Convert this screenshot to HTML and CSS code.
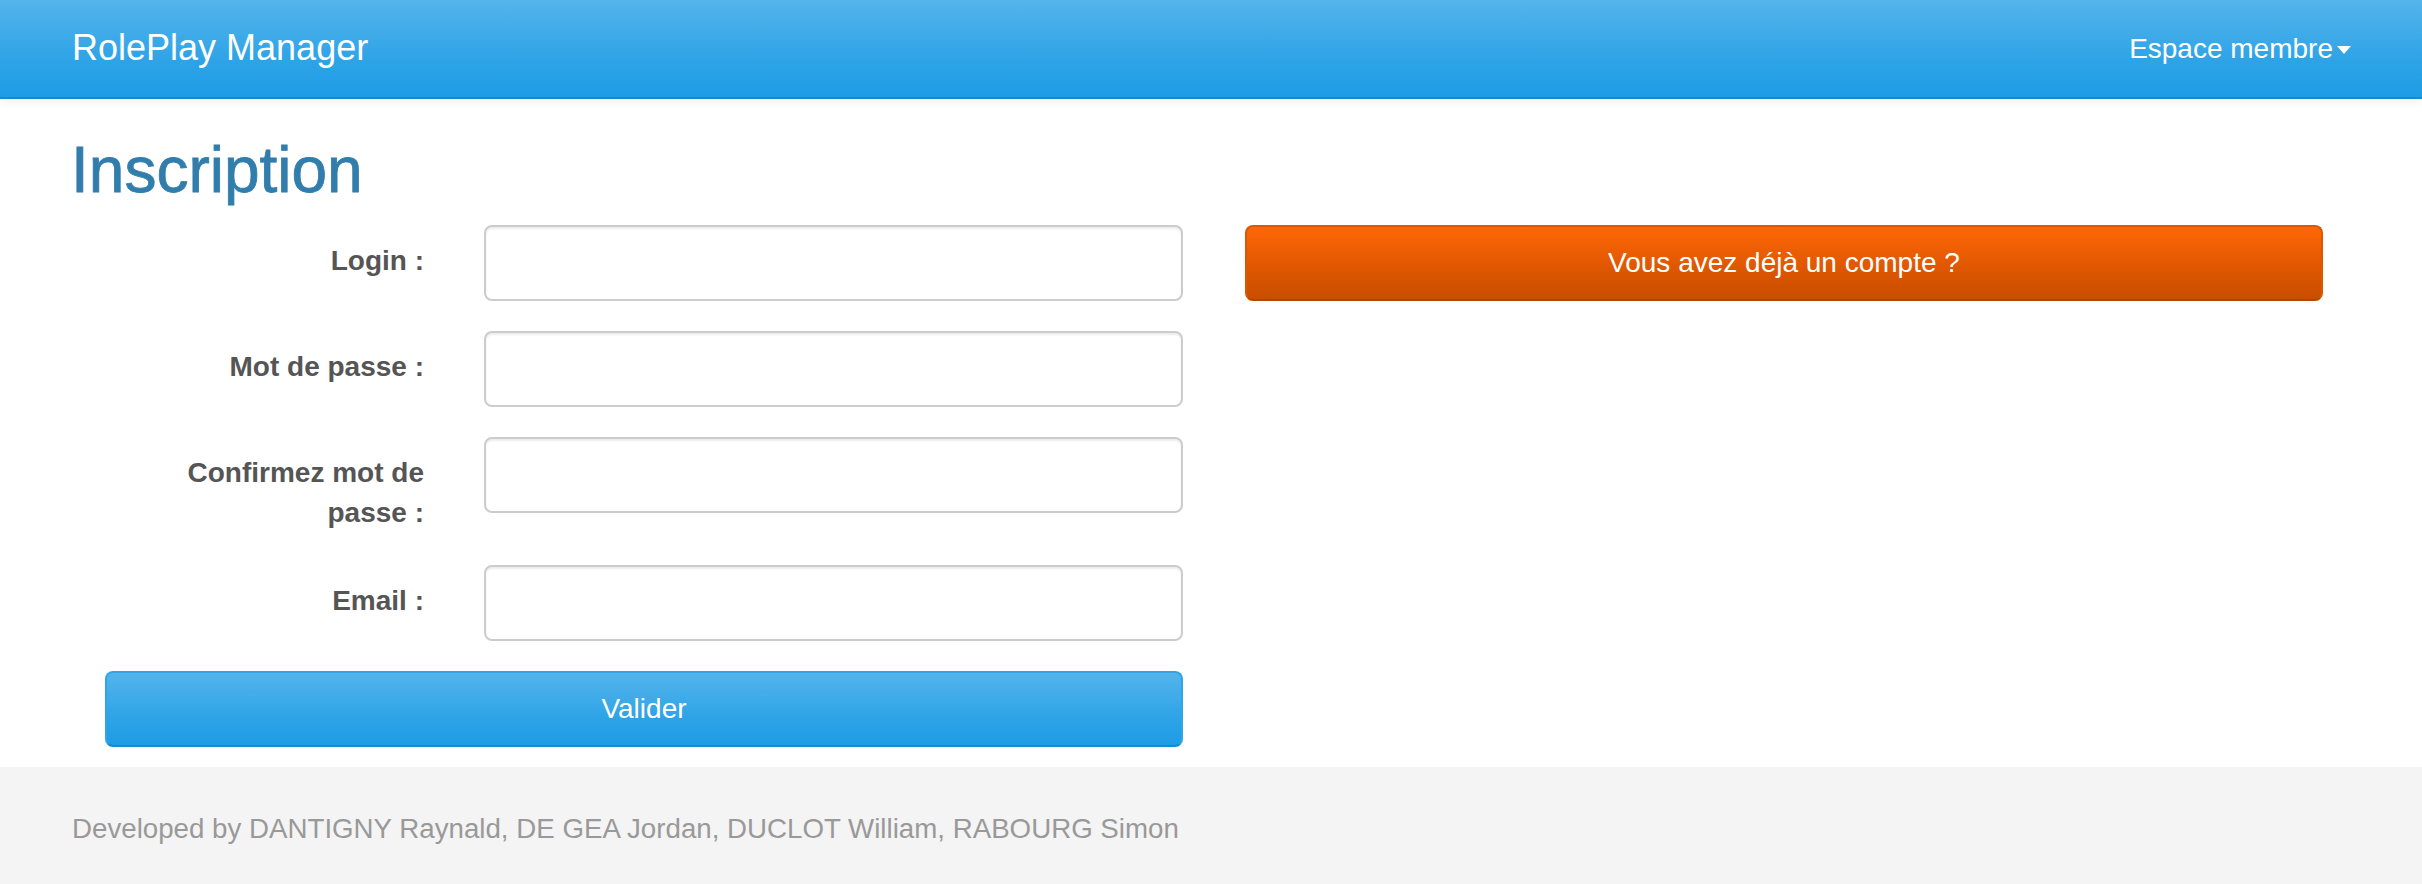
FILE: index.html
```html
<!DOCTYPE html>
<html lang="fr">
<head>
<meta charset="utf-8">
<title>RolePlay Manager - Inscription</title>
<link rel="stylesheet" href="styles.css">
</head>
<body>
<header class="navbar">
  <div class="navbar-inner">
    <a class="brand" href="#">RolePlay Manager</a>
    <a class="member" href="#">Espace membre<span class="caret"></span></a>
  </div>
</header>
<main class="container">
  <h1 class="page-title">Inscription</h1>
  <div class="content-row">
    <form class="signup">
      <div class="field">
        <label for="login">Login :</label>
        <input id="login" type="text">
      </div>
      <div class="field">
        <label for="pass">Mot de passe :</label>
        <input id="pass" type="password">
      </div>
      <div class="field">
        <label for="pass2">Confirmez mot de passe :</label>
        <input id="pass2" type="password">
      </div>
      <div class="field">
        <label for="email">Email :</label>
        <input id="email" type="email">
      </div>
      <button type="button" class="btn btn-primary">Valider</button>
    </form>
    <div class="side">
      <a class="btn btn-warning" href="#">Vous avez déjà un compte ?</a>
    </div>
  </div>
</main>
<footer class="footer">
  <p>Developed by DANTIGNY Raynald, DE GEA Jordan, DUCLOT William, RABOURG Simon</p>
</footer>
</body>
</html>
```
FILE: styles.css
```css
html, body {
  margin: 0;
  padding: 0;
  background: #fff;
}
body {
  font-family: "Liberation Sans", Arial, sans-serif;
  font-size: 28px;
  line-height: 40px;
  color: #555;
}
a {
  text-decoration: none;
}

/* Navbar */
.navbar {
  height: 97px;
  border-bottom: 2px solid #178acc;
  background: linear-gradient(#54b4eb, #2fa4e7 60%, #1d9ce5);
  box-shadow: 0 2px 10px rgba(0, 0, 0, 0.07);
  position: relative;
}
.navbar-inner {
  height: 100%;
  display: flex;
  align-items: center;
  justify-content: space-between;
  padding: 0 71px 0 72px;
}
.brand {
  color: #fff;
  font-size: 36px;
  line-height: 1;
  margin-top: -2px;
}
.member {
  color: #fff;
  font-size: 28px;
  display: flex;
  align-items: center;
}
.caret {
  width: 0;
  height: 0;
  border-top: 8px solid #fff;
  border-left: 7px solid transparent;
  border-right: 7px solid transparent;
  margin-left: 4px;
  margin-top: 2px;
}

/* Main */
.container {
  padding: 0 71px;
}
.page-title {
  margin: 37px 0 21px;
  font-size: 64px;
  line-height: 68px;
  font-weight: normal;
  color: #317eac;
  -webkit-text-stroke: 0.8px #317eac;
}
.content-row {
  display: grid;
  grid-template-columns: 1fr 1fr;
  column-gap: 62px;
  margin: 0 28px 0 34px;
  align-items: start;
}

.field {
  display: grid;
  grid-template-columns: 319px 1fr;
  column-gap: 60px;
  margin-bottom: 30px;
  align-items: start;
}
.field label {
  text-align: right;
  font-weight: bold;
  padding: 16px 0 2px;
  line-height: 40px;
  color: #555;
}
.field input {
  display: block;
  width: 100%;
  height: 76px;
  box-sizing: border-box;
  border: 2px solid #ccc;
  border-radius: 8px;
  box-shadow: inset 0 2px 2px rgba(0, 0, 0, 0.075);
  background: #fff;
  padding: 12px 24px;
  font: inherit;
  color: #555;
}

.btn {
  display: block;
  width: 100%;
  height: 76px;
  box-sizing: border-box;
  border-radius: 8px;
  border: 2px solid transparent;
  color: #fff;
  font-family: inherit;
  font-size: 28px;
  line-height: 72px;
  text-align: center;
  padding: 0;
  cursor: pointer;
}
.btn-primary {
  background: linear-gradient(#54b4eb, #2fa4e7 60%, #1d9ce5);
  border-color: #2fa4e7 #2fa4e7 #178acc;
}
.btn-warning {
  background: linear-gradient(#ff6707, #dd5600 60%, #c94e00);
  border-color: #dd5600 #dd5600 #b54600;
}

/* Footer */
.footer {
  margin-top: 20px;
  background: #f4f4f4;
  padding: 42px 72px 36px;
}
.footer p {
  margin: 0;
  color: #999;
  font-size: 27.7px;
  line-height: 40px;
}
```
